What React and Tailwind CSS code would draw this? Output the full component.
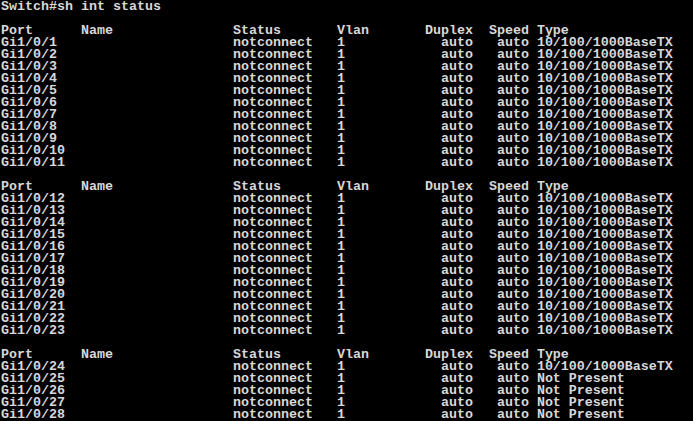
import React from 'react';

const header = 'Port      Name               Status       Vlan       Duplex  Speed Type';

const row = (port, type) =>
  port.padEnd(29, ' ') + 'notconnect   1            auto   auto ' + type;

const blocks = [
  [1, 11],
  [12, 23],
  [24, 28],
];

const App = () => {
  const lines = ['Switch#sh int status'];
  blocks.forEach(([from, to]) => {
    lines.push('');
    lines.push(header);
    for (let i = from; i <= to; i++) {
      lines.push(row(`Gi1/0/${i}`, i >= 25 ? 'Not Present' : '10/100/1000BaseTX'));
    }
  });

  return (
    <div className="w-[693px] h-[421px] bg-black overflow-hidden">
      <pre className="font-['Liberation_Mono',monospace] font-bold text-[13.33px] leading-[12px] text-[#d8d8d8] pl-[1px] pt-[1px] whitespace-pre">
        {lines.join('\n')}
      </pre>
    </div>
  );
};

export default App;
